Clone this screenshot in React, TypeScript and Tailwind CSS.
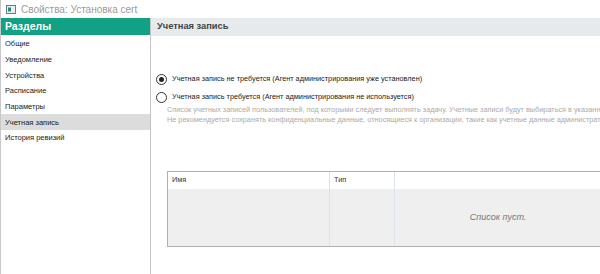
import React from 'react'

const sections = ['Общие', 'Уведомление', 'Устройства', 'Расписание', 'Параметры', 'Учетная запись', 'История ревизий']

function Radio({ checked }: { checked?: boolean }) {
  return (
    <span className="w-[11px] h-[11px] rounded-full border border-[#333] bg-white flex items-center justify-center shrink-0">
      {checked && <span className="w-[5px] h-[5px] rounded-full bg-[#222]" />}
    </span>
  )
}

export default function App() {
  return (
    <div
      className="w-[600px] h-[274px] bg-white overflow-hidden flex flex-col border-l border-[#c8c8c8]"
      style={{ fontFamily: '"Liberation Sans", "DejaVu Sans", sans-serif' }}
    >
      {/* title bar */}
      <div className="h-[18px] flex items-center gap-[5px] pl-[5px] shrink-0">
        <svg width="10" height="9" viewBox="0 0 10 9">
          <rect x="0.5" y="0.5" width="9" height="8" fill="#e8eef2" stroke="#6b7a86" />
          <rect x="2" y="2.5" width="3" height="4" fill="#1f8f7a" />
        </svg>
        <span className="text-[10px] text-[#9a9a9a]">Свойства: Установка cert</span>
      </div>

      <div className="flex flex-1 min-h-0">
        {/* sidebar */}
        <div className="w-[150px] shrink-0 border-r border-[#c4c4c4] flex flex-col">
          <div className="h-[17px] bg-[#12a184] text-white font-bold text-[10.5px] flex items-center pl-[4px] mb-[1px]">
            Разделы
          </div>
          <div className="flex flex-col">
            {sections.map((s, i) => (
              <div
                key={s}
                className={`h-[15.7px] flex items-center pl-[4px] text-[7.5px] text-[#1a1a1a] ${i === 5 ? 'bg-[#dcdcdc]' : ''}`}
              >
                {s}
              </div>
            ))}
          </div>
        </div>

        {/* content */}
        <div className="flex-1 min-w-0 overflow-hidden flex flex-col">
          <div className="h-[18px] bg-[#e6eaed] flex items-center pl-[6px] font-bold text-[9.3px] text-[#444] shrink-0">
            Учетная запись
          </div>
          <div className="pl-[5px] pt-[37px] w-[700px]">
            <div className="flex items-center gap-[5px] h-[12px] text-[7.3px] text-[#222] whitespace-nowrap">
              <Radio checked />
              Учетная запись не требуется (Агент администрирования уже установлен)
            </div>
            <div className="flex items-center gap-[5px] h-[12px] mt-[6px] text-[7.3px] text-[#222] whitespace-nowrap">
              <Radio />
              Учетная запись требуется (Агент администрирования не используется)
            </div>
            <div className="pl-[11px] mt-[2px] text-[7.3px] leading-[10px] text-[#ababab] whitespace-nowrap">
              <div>Список учетных записей пользователей, под которыми следует выполнять задачу. Учетные записи будут выбираться в указанном порядке.</div>
              <div>Не рекомендуется сохранять конфиденциальные данные, относящиеся к организации, такие как учетные данные администратора.</div>
            </div>

            <div className="ml-[11px] mt-[46px] w-[662px] h-[76px] border border-[#b0b0b0] flex flex-col">
              <div className="h-[17px] flex text-[7.3px] text-[#333] bg-white">
                <div className="w-[162px] pl-[4px] flex items-center border-r border-[#dbe4ec]">Имя</div>
                <div className="w-[65px] pl-[4px] flex items-center border-r border-[#dbe4ec]">Тип</div>
                <div className="flex-1" />
              </div>
              <div className="flex-1 bg-[#efefef] flex relative">
                <div className="w-[162px] border-r border-[#dbe4ec]" />
                <div className="w-[65px] border-r border-[#dbe4ec]" />
                <div className="absolute inset-0 flex items-center justify-center italic text-[9px] text-[#777]">
                  Список пуст.
                </div>
              </div>
            </div>
          </div>
        </div>
      </div>
    </div>
  )
}
